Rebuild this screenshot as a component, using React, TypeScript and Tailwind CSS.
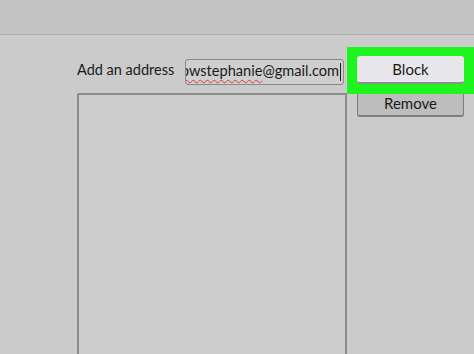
import React from "react";

export default function App() {
  const font = { fontFamily: 'Lato, "Open Sans", sans-serif' };
  return (
    <div className="w-[474px] h-[354px] overflow-hidden bg-[#cbcbcb] flex flex-col" style={font}>
      <div className="h-[35px] bg-[#c3c3c3] border-b border-[#adadad] shrink-0" />
      <div className="flex flex-1 min-h-0 pl-[77px] pt-[12px]">
        <div className="flex flex-col w-[270px] shrink-0">
          <div className="flex items-center h-[33px] mt-[10px]">
            <span className="text-[14.5px] text-[#1a1a1a] w-[108px] shrink-0 leading-none whitespace-nowrap -mt-[6px]">Add an address</span>
            <div className="w-[159px] h-[26px] border border-[#8a8a8a] rounded-[3px] bg-[#cfcfcf] flex justify-end items-center overflow-hidden pr-[2px] -mt-[4px]">
              <span className="whitespace-nowrap text-[14.6px] text-[#1a1a1a] leading-none">
                wikih<span className="underline decoration-wavy decoration-[#d23c3c] decoration-1 underline-offset-[3px]">owstephanie</span>@gmail.com
              </span>
              <span className="w-px h-[18px] bg-[#1e1e1e] shrink-0 ml-px" />
            </div>
          </div>
          <div className="flex-1 border-2 border-[#8c8c8c] border-b-0 mt-[3px] rounded-tl-[2px] bg-[#cdcdcd]" />
        </div>
        <div className="flex flex-col">
          <div className="w-[128px] h-[47px] bg-[#1ef51e] pl-[10px] pt-[9px]">
            <div className="w-[107px] h-[28px] bg-[#e7e6ea] rounded-[3px] border-b-2 border-[#8f8f93] flex items-center justify-center text-[15px] text-[#1a1a1a]">
              Block
            </div>
          </div>
          <div className="ml-[10px] w-[107px] h-[23px] bg-[#bdbdbd] rounded-b-[3px] border-b-2 border-x border-[#7f7f7f] flex items-center justify-center text-[15px] text-[#1a1a1a] pb-[2px]">
            Remove
          </div>
        </div>
      </div>
    </div>
  );
}
